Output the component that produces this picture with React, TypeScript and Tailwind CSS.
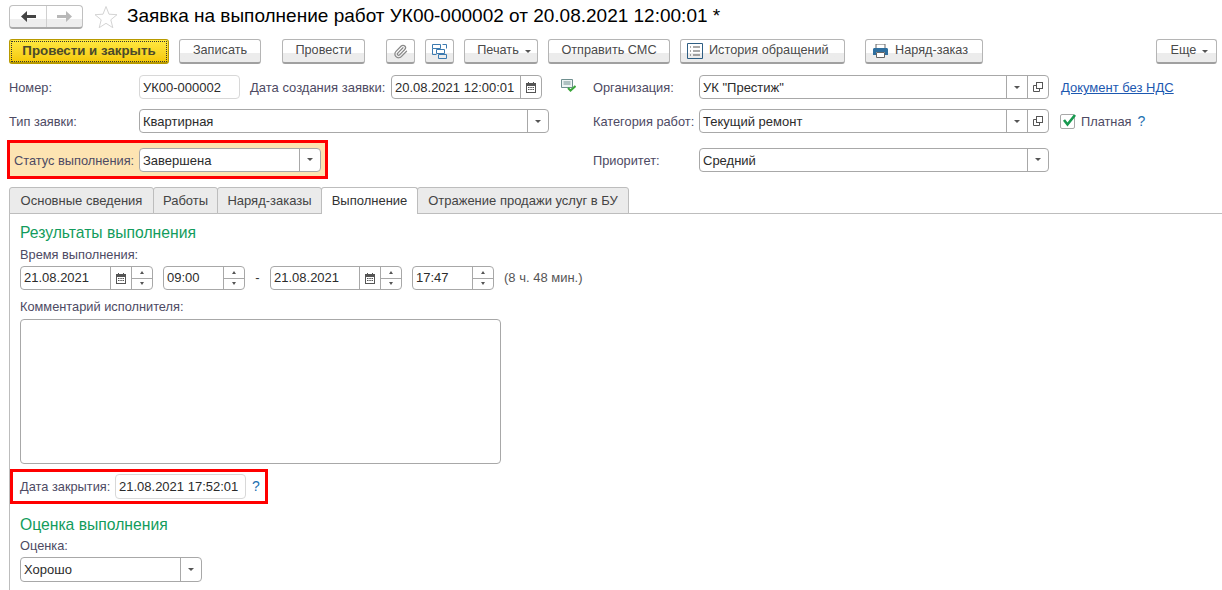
import React from "react";
import { Paperclip } from "lucide-react";

const FIELD = "flex h-[24px] shrink-0 items-stretch rounded-[4px] border border-[#a8a8a8] bg-white text-[#2b2b2b]";
const LABEL = "shrink-0 whitespace-nowrap text-[12.8px] text-[#4d4a63]";
const BTN =
  "flex h-[25px] shrink-0 items-center justify-center whitespace-nowrap rounded-[3px] border border-[#b5b5b5] border-b-[2px] border-b-[#a0a0a0] bg-gradient-to-b from-white from-[60%] to-[#ececec] to-[60%] text-[12.7px] text-[#4a4a4a]";

function Caret() {
  return <span className="h-0 w-0 border-x-[3px] border-t-[3px] border-x-transparent border-t-[#555]" />;
}

function DropButton() {
  return (
    <span className="flex w-[21px] items-center justify-center border-l border-[#a8a8a8]">
      <Caret />
    </span>
  );
}

function OpenButton() {
  return (
    <span className="flex w-[21px] items-center justify-center border-l border-[#a8a8a8]">
      <svg width="10" height="10" viewBox="0 0 10 10" fill="none" stroke="#555">
        <rect x="3.500" y="0.500" width="6" height="6" />
        <path d="M3.500 3.500h-3v6h6v-3" />
      </svg>
    </span>
  );
}

function CalendarButton() {
  return (
    <span className="flex w-[21px] items-center justify-center border-l border-[#a8a8a8]">
      <svg width="10" height="11" viewBox="0 0 10 11">
        <path d="M0 1h2V0h1v1h4V0h1v1h2v10H0z" fill="#555" />
        <path d="M1 4h8v6H1z" fill="#fff" />
        <path d="M2 5h1.500v1H2zM4.300 5h1.500v1H4.300zM6.500 5H8v1H6.500zM2 7h1.500v1H2zM4.300 7h1.500v1H4.300zM6.500 7H8v1H6.500z" fill="#555" />
      </svg>
    </span>
  );
}

function Spinner() {
  return (
    <span className="flex w-[21px] flex-col border-l border-[#a8a8a8]">
      <span className="flex flex-1 items-center justify-center border-b border-[#a8a8a8]">
        <span className="h-0 w-0 border-x-[2px] border-b-[3px] border-x-transparent border-b-[#555]" />
      </span>
      <span className="flex flex-1 items-center justify-center">
        <span className="h-0 w-0 border-x-[2px] border-t-[3px] border-x-transparent border-t-[#555]" />
      </span>
    </span>
  );
}

function Value({ children }: { children?: React.ReactNode }) {
  return <span className="flex min-w-0 flex-1 items-center pl-[3px] whitespace-nowrap">{children}</span>;
}

function Tab({ children, active, className }: { children: React.ReactNode; active?: boolean; className: string }) {
  return (
    <div
      className={`${className} relative flex h-[27px] shrink-0 items-center justify-center whitespace-nowrap rounded-t-[3px] border border-[#bdbdbd] ${
        active ? "border-b-0 bg-white text-[#333]" : "bg-[#ebebeb] text-[#444]"
      }`}
    >
      {children}
    </div>
  );
}

export default function App() {
  return (
    <div className="flex h-[590px] w-[1222px] flex-col overflow-hidden bg-white pt-[5px] font-['Liberation_Sans',Arial,sans-serif] text-[13px] text-[#333]">
      {/* Title row */}
      <div className="flex h-[23px] items-center pl-[9px]">
        <div className="flex h-[24px] w-[74px] rounded-[4px] border border-[#c0c0c0] border-b-[2px] border-b-[#aaa] bg-gradient-to-b from-white from-[60%] to-[#eeeeee] to-[60%]">
          <span className="flex w-[37px] items-center justify-center border-r border-[#d0d0d0]">
            <svg width="15" height="11" viewBox="0 0 15 11" fill="#444">
              <path d="M6 0 0 5.500 6 11V7h9V4H6z" />
            </svg>
          </span>
          <span className="flex flex-1 items-center justify-center">
            <svg width="15" height="11" viewBox="0 0 15 11" fill="#b8b8b8">
              <path d="M9 0l6 5.500L9 11V7H0V4h9z" />
            </svg>
          </span>
        </div>
        <svg className="ml-[11px]" width="24" height="24" viewBox="0 0 24 24" fill="none" stroke="#d4d4d4">
          <path d="M12 1.500l3 7.700 8 .500-6.200 5.100 2 7.900L12 18.300l-6.800 4.400 2-7.900L1 9.700l8-.500z" />
        </svg>
        <span className="ml-[9px] text-[19px] whitespace-nowrap text-black">
          Заявка на выполнение работ УК00-000002 от 20.08.2021 12:00:01 *
        </span>
      </div>

      {/* Toolbar */}
      <div className="mt-[11px] flex pl-[9px]">
        <div className="flex h-[25px] w-[160px] shrink-0 items-center justify-center rounded-[3px] border border-[#b89a00] border-b-[2px] bg-gradient-to-b from-[#ffe93f] to-[#f5c800] text-[13.3px] font-bold text-[#4a4a2a] outline-1 -outline-offset-3 outline-dotted outline-[#333]">
          Провести и закрыть
        </div>
        <div className={`${BTN} ml-[10px] w-[82px]`}>Записать</div>
        <div className={`${BTN} ml-[21px] w-[83px]`}>Провести</div>
        <div className={`${BTN} ml-[21px] w-[29px]`}>
          <Paperclip size={15} className="text-[#888]" />
        </div>
        <div className={`${BTN} ml-[10px] w-[29px]`}>
          <svg width="15" height="15" viewBox="0 0 15 15" fill="none" stroke="#3c7ab0">
            <path d="M.5.5h8v4h-8zM4.500 5.500h8v4h-8zM6.500 10.500h8v4h-8zM10.500.5h4v4M.5 4.500v6h4" />
          </svg>
        </div>
        <div className={`${BTN} ml-[10px] w-[74px] gap-[6px] pl-[6px]`}>
          Печать
          <Caret />
        </div>
        <div className={`${BTN} ml-[10px] w-[122px]`}>Отправить СМС</div>
        <div className={`${BTN} ml-[10px] w-[165px] !justify-start gap-[6px] pl-[6px]`}>
          <svg width="16" height="16" viewBox="0 0 16 16" fill="none" stroke="#2f5f84">
            <path d="M.5.5h15v15H.5z" />
            <path d="M3 4h1M6 4h7M3 8h1M6 8h7M3 12h1M6 12h7" stroke="#555" />
          </svg>
          История обращений
        </div>
        <div className={`${BTN} ml-[20px] w-[118px] !justify-start gap-[7px] pl-[7px]`}>
          <svg width="15" height="14" viewBox="0 0 15 14">
            <path d="M3 0h9v5H3z" fill="#fff" stroke="#666" />
            <path d="M0 5.500C0 4.500.7 4 1.500 4h12c.8 0 1.500.5 1.500 1.500V11h-3V8H3v3H0z" fill="#2f6f9f" />
            <path d="M3.500 8.500h8v5h-8z" fill="#fff" stroke="#666" />
          </svg>
          Наряд-заказ
        </div>
        <div className={`${BTN} ml-[173px] w-[61px] gap-[6px] pl-[6px]`}>
          Еще
          <Caret />
        </div>
      </div>

      {/* Row 1 */}
      <div className="mt-[11px] flex h-[24px] items-center pl-[9px]">
        <span className={`${LABEL} w-[130px] pt-[2px]`}>Номер:</span>
        <div className={`${FIELD} w-[101px] border-[#d8d8d8] pt-[2px]`}>
          <Value>УК00-000002</Value>
        </div>
        <span className={`${LABEL} ml-[10px] w-[141px] pt-[2px] !text-[13px]`}>Дата создания заявки:</span>
        <div className={`${FIELD} w-[151px]`}>
          <span className="flex min-w-0 flex-1 items-center pt-[2px] pl-[3px] whitespace-nowrap">20.08.2021 12:00:01</span>
          <CalendarButton />
        </div>
        <svg className="mt-[-4px] ml-[19px]" width="15" height="13" viewBox="0 0 15 13" fill="none">
          <path d="M.5.5h11v8H.5z" stroke="#6f8f8f" fill="#eef4f4" />
          <path d="M2.500 3h7M2.500 5h7" stroke="#6f8f8f" />
          <path d="M7 9l2.500 2.500L14.500 7" stroke="#3aa63a" strokeWidth="2" />
        </svg>
        <span className={`${LABEL} ml-[17px] w-[106px] pt-[2px]`}>Организация:</span>
        <div className={`${FIELD} w-[350px]`}>
          <span className="flex min-w-0 flex-1 items-center pt-[2px] pl-[3px] whitespace-nowrap">УК "Престиж"</span>
          <DropButton />
          <OpenButton />
        </div>
        <a className="ml-[12px] pt-[2px] whitespace-nowrap text-[#1c58b0] underline">Документ без НДС</a>
      </div>

      {/* Row 2 */}
      <div className="mt-[10px] flex h-[24px] items-center pl-[9px]">
        <span className={`${LABEL} w-[130px] pt-[2px]`}>Тип заявки:</span>
        <div className={`${FIELD} w-[410px]`}>
          <span className="flex min-w-0 flex-1 items-center pt-[2px] pl-[3px] whitespace-nowrap">Квартирная</span>
          <DropButton />
        </div>
        <span className={`${LABEL} ml-[44px] w-[106px] pt-[2px]`}>Категория работ:</span>
        <div className={`${FIELD} w-[350px]`}>
          <span className="flex min-w-0 flex-1 items-center pt-[2px] pl-[3px] whitespace-nowrap">Текущий ремонт</span>
          <DropButton />
          <OpenButton />
        </div>
        <span className="relative ml-[11px] h-[15px] w-[15px] shrink-0 rounded-[2px] border border-[#a8a8a8]">
          <svg className="absolute -top-[3px] left-0" width="16" height="17" viewBox="0 0 16 17" fill="none">
            <path d="M3 8l3.500 4.500L14 3" stroke="#17994f" strokeWidth="2.600" />
          </svg>
        </span>
        <span className={`${LABEL} ml-[6px] pt-[2px]`}>Платная</span>
        <span className="ml-[6px] pt-[1px] text-[14px] text-[#1c6fb0]">?</span>
      </div>

      {/* Row 3 */}
      <div className="mt-[7px] flex h-[39px] items-center pl-[7px]">
        <div className="flex h-[39px] w-[321px] shrink-0 items-center border-[3px] border-[#ff0000] bg-[#fde4b2] pl-[4px]">
          <span className={`${LABEL} w-[125px] pt-[2px]`}>Статус выполнения:</span>
          <div className={`${FIELD} w-[182px]`}>
            <span className="flex min-w-0 flex-1 items-center pt-[2px] pl-[3px] whitespace-nowrap">Завершена</span>
            <DropButton />
          </div>
        </div>
        <span className={`${LABEL} ml-[265px] w-[106px] pt-[2px]`}>Приоритет:</span>
        <div className={`${FIELD} w-[350px]`}>
          <span className="flex min-w-0 flex-1 items-center pt-[2px] pl-[3px] whitespace-nowrap">Средний</span>
          <DropButton />
        </div>
      </div>

      {/* Tabs */}
      <div className="mt-[8px] flex pl-[9px]">
        <Tab className="w-[145px]">Основные сведения</Tab>
        <Tab className="-ml-px w-[65px]">Работы</Tab>
        <Tab className="-ml-px w-[105px]">Наряд-заказы</Tab>
        <Tab className="-ml-px z-10 w-[97px]" active>
          Выполнение
        </Tab>
        <Tab className="-ml-px w-[212px]">Отражение продажи услуг в БУ</Tab>
      </div>

      {/* Tab body */}
      <div className="-mt-px ml-[9px] flex-1 border-t border-l border-[#bdbdbd] pl-[10px]">
        <div className="mt-[10px] text-[15.7px] leading-[18px] text-[#129c5c]">Результаты выполнения</div>
        <div className={`${LABEL} mt-[6px] leading-[14px]`}>Время выполнения:</div>
        <div className="mt-[4px] flex h-[24px] items-center">
          <div className={`${FIELD} w-[133px]`}>
            <Value>21.08.2021</Value>
            <CalendarButton />
            <Spinner />
          </div>
          <div className={`${FIELD} ml-[10px] w-[82px]`}>
            <Value>09:00</Value>
            <Spinner />
          </div>
          <span className="w-[25px] text-center">-</span>
          <div className={`${FIELD} w-[132px]`}>
            <Value>21.08.2021</Value>
            <CalendarButton />
            <Spinner />
          </div>
          <div className={`${FIELD} ml-[10px] w-[82px]`}>
            <Value>17:47</Value>
            <Spinner />
          </div>
          <span className="ml-[10px] whitespace-nowrap text-[#555]">(8 ч. 48 мин.)</span>
        </div>
        <div className={`${LABEL} mt-[10px] leading-[14px]`}>Комментарий исполнителя:</div>
        <div className="mt-[5px] h-[145px] w-[481px] rounded-[4px] border border-[#a8a8a8]" />
        <div className="mt-[5px] -ml-[10px] flex h-[35px] w-[258px] items-center border-[3px] border-[#ff0000] pl-[7px]">
          <span className={`${LABEL} w-[95px]`}>Дата закрытия:</span>
          <div className={`${FIELD} h-[25px] w-[131px] border-[#d8d8d8]`}>
            <Value>21.08.2021 17:52:01</Value>
          </div>
          <span className="ml-[6px] text-[14px] text-[#1c6fb0]">?</span>
        </div>
        <div className="mt-[12px] text-[15.7px] leading-[18px] text-[#129c5c]">Оценка выполнения</div>
        <div className={`${LABEL} mt-[5px] leading-[14px]`}>Оценка:</div>
        <div className={`${FIELD} mt-[4px] h-[25px] w-[182px]`}>
          <Value>Хорошо</Value>
          <DropButton />
        </div>
      </div>
    </div>
  );
}
